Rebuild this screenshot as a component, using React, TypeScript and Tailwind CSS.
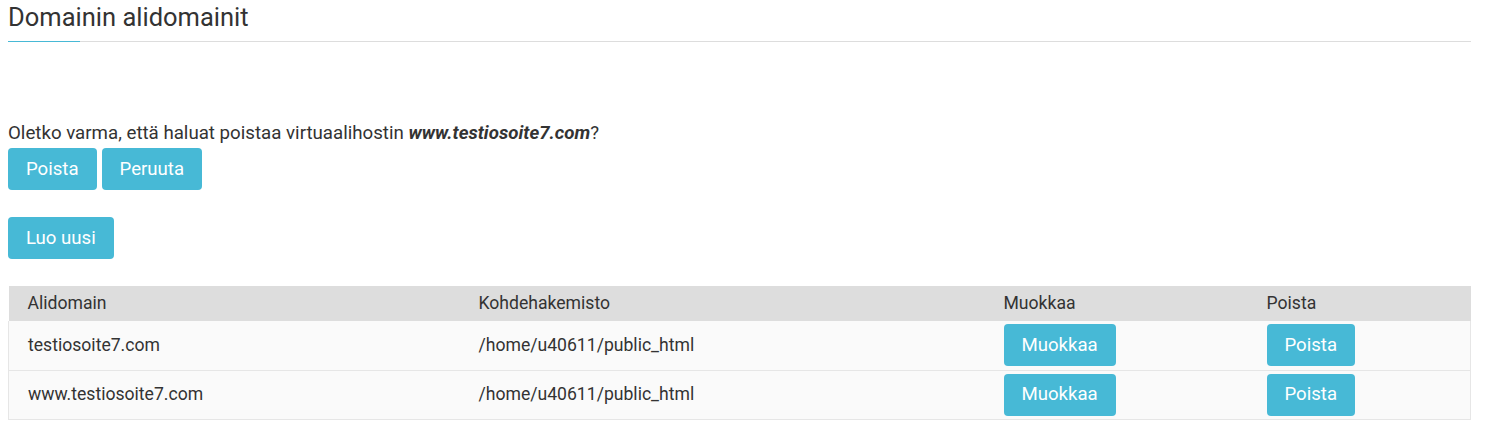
const btn =
  "inline-flex items-center justify-center h-[42px] px-[18px] rounded-[4px] bg-[#47b9d6] text-white text-[18.6px] leading-none";

const rows = [
  { name: "testiosoite7.com", dir: "/home/u40611/public_html" },
  { name: "www.testiosoite7.com", dir: "/home/u40611/public_html" },
];

export default function App() {
  return (
    <div className="min-h-[441px] bg-white px-2 text-[#333] font-['Roboto',sans-serif]">
      <div className="pt-[2px] w-[1463px]">
        <h2 className="text-[25.5px] leading-[31px] font-normal">Domainin alidomainit</h2>
        <div className="mt-[8px] h-px bg-[#dddddd]">
          <div className="w-[72px] h-px bg-[#47b9d6]" />
        </div>
      </div>

      <p className="mt-[79px] text-[18.7px] leading-[25px]">
        Oletko varma, että haluat poistaa virtuaalihostin <b className="italic font-bold">www.testiosoite7.com</b>?
      </p>
      <div className="flex gap-[5px] mt-[2px]">
        <button className={btn}>Poista</button>
        <button className={btn}>Peruuta</button>
      </div>

      <div className="mt-[27px]">
        <button className={btn}>Luo uusi</button>
      </div>

      <table className="mt-[27px] w-[1462px] table-fixed border-collapse text-[17.6px]">
        <colgroup>
          <col className="w-[450px]" />
          <col className="w-[525px]" />
          <col className="w-[263px]" />
          <col className="w-[224px]" />
        </colgroup>
        <thead>
          <tr className="bg-[#dddddd] h-[35px]">
            <th className="text-left font-normal pl-[19px]">Alidomain</th>
            <th className="text-left font-normal pl-5">Kohdehakemisto</th>
            <th className="text-left font-normal pl-5">Muokkaa</th>
            <th className="text-left font-normal pl-5">Poista</th>
          </tr>
        </thead>
        <tbody>
          {rows.map((r) => (
            <tr key={r.name} className="bg-[#fafafa] border border-t-0 border-[#e6e6e6] h-[49px]">
              <td className="pl-[19px]">{r.name}</td>
              <td className="pl-5">{r.dir}</td>
              <td className="pl-5">
                <button className={btn}>Muokkaa</button>
              </td>
              <td className="pl-5">
                <button className={btn}>Poista</button>
              </td>
            </tr>
          ))}
        </tbody>
      </table>
    </div>
  );
}
